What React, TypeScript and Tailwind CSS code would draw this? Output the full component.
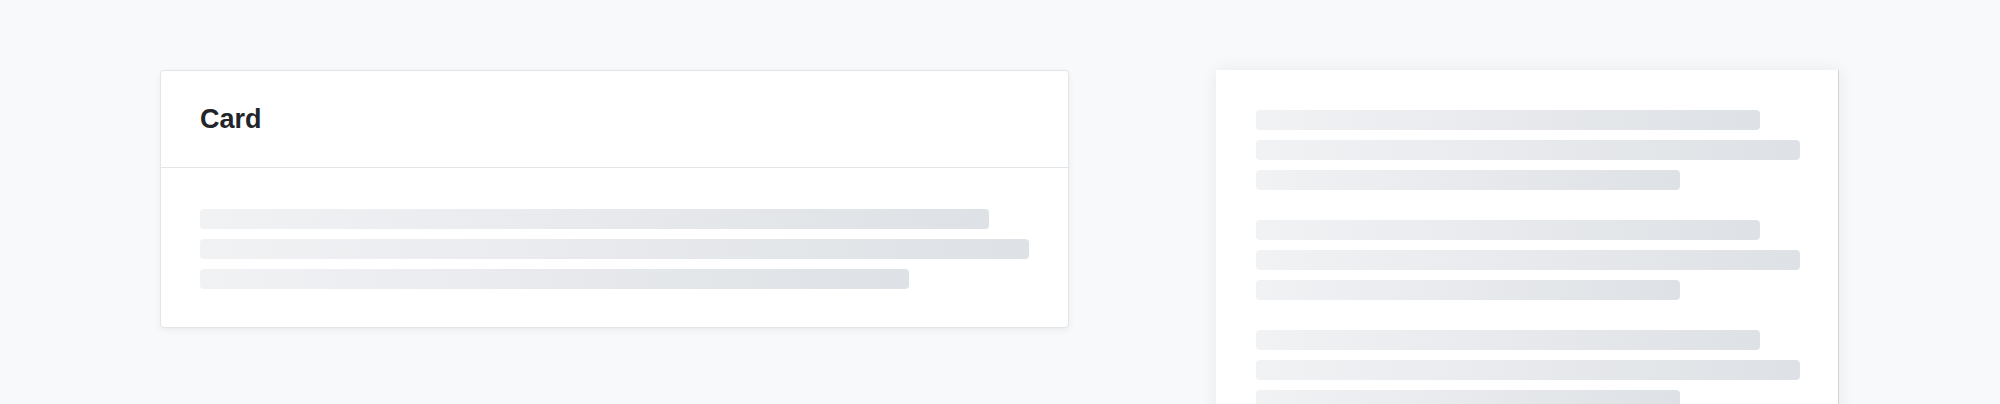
const barCls = 'h-5 rounded-[4px] bg-linear-to-r from-[#f1f2f4] to-[#dee1e5]';

// Three skeleton lines: width minus 40px, full width, width minus 120px
function SkeletonGroup() {
  return (
    <div className="flex flex-col gap-[10px]">
      <div className={`${barCls} w-[calc(100%-40px)]`} />
      <div className={`${barCls} w-full`} />
      <div className={`${barCls} w-[calc(100%-120px)]`} />
    </div>
  );
}

function Card() {
  return (
    <section className="w-[909px] shrink-0 self-start bg-white border border-[#e3e6e9] rounded-[4px] shadow-[0_2px_6px_rgba(0,0,0,0.06)]">
      <header className="h-[97px] flex items-center px-[39px] border-b border-[#e3e6e9]">
        <h2 className="text-[27px] leading-none font-bold text-[#212529]">Card</h2>
      </header>
      <div className="px-[39px] pt-[41px] pb-[38px]">
        <SkeletonGroup />
      </div>
    </section>
  );
}

function SidePanel() {
  return (
    <aside className="flex-1 bg-white border-r border-[#ced3d8] shadow-[0_0_16px_rgba(0,0,0,0.07)] pl-10 pr-[38px] pt-10 pb-10">
      <div className="flex flex-col gap-[30px]">
        <SkeletonGroup />
        <SkeletonGroup />
        <SkeletonGroup />
      </div>
    </aside>
  );
}

export default function App() {
  return (
    <div
      className="min-h-screen bg-[#f8f9fa]"
      style={{ fontFamily: '"Liberation Sans", Arial, sans-serif' }}
    >
      <div className="flex items-start gap-[147px] pl-[160px] pr-[161px] pt-[70px]">
        <Card />
        <SidePanel />
      </div>
    </div>
  );
}
